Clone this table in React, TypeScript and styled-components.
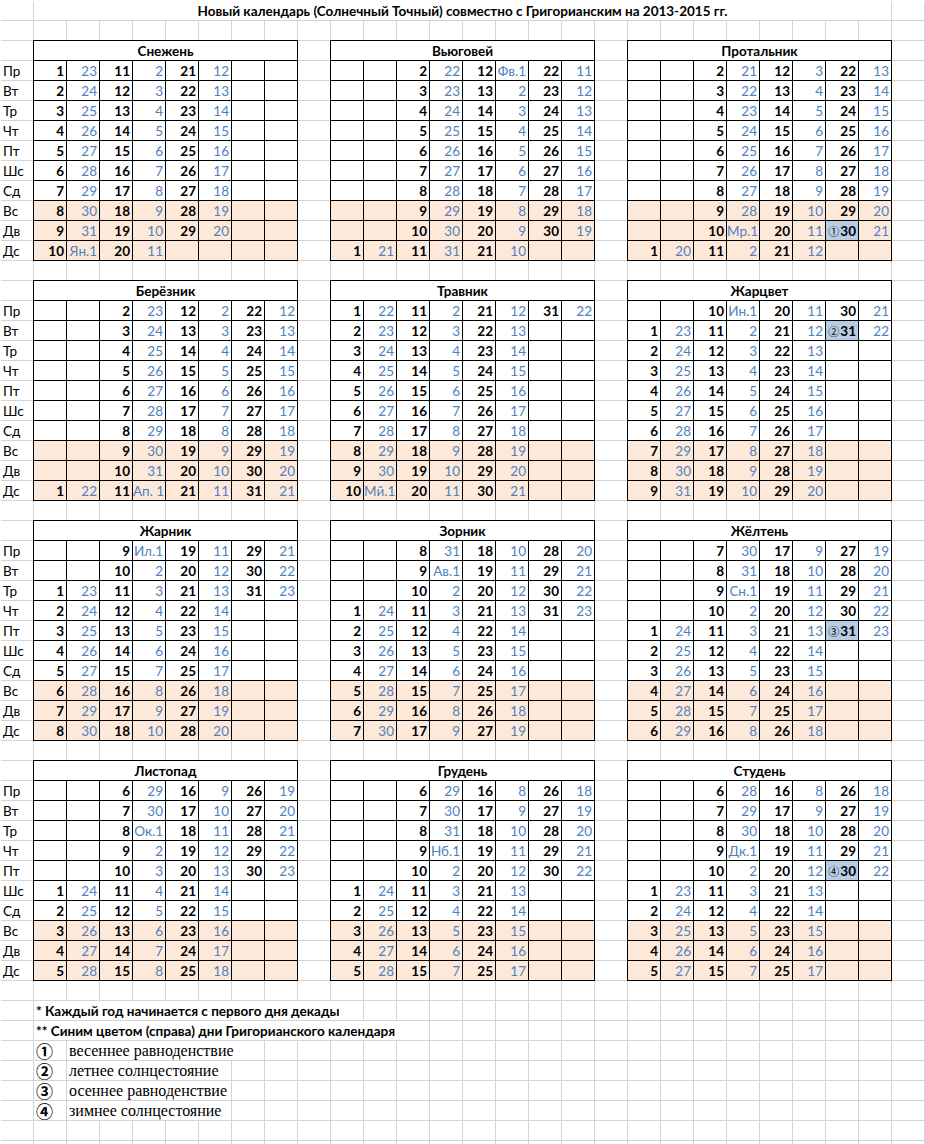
import React from 'react';
import styled, { createGlobalStyle } from 'styled-components';

const GlobalStyle = createGlobalStyle`
  html, body { margin: 0; padding: 0; background: #fff; }
`;

const GRID = '#d4d4d4';
const COL = 33;

const Sheet = styled.div`
  width: 925px;
  min-height: 1144px;
  box-sizing: border-box;
  font-family: Lato, "Noto Sans", sans-serif;
  font-size: 13.5px;
  color: #000;
  background-color: #fff;
  background-image:
    linear-gradient(#fff, #fff),
    linear-gradient(#fff, #fff),
    linear-gradient(to right, ${GRID} 1px, transparent 1px),
    linear-gradient(to bottom, ${GRID} 1px, transparent 1px);
  background-size: 100% 1px, 1px 100%, ${COL}px 20px, ${COL}px 20px;
  background-repeat: no-repeat, no-repeat, repeat, repeat;
`;

const TitleRow = styled.div`
  height: 40px;
  padding-left: 34px;
  box-sizing: border-box;
`;

const Title = styled.div`
  width: ${26 * COL - 1}px;
  height: 20px;
  padding-top: 1px;
  box-sizing: border-box;
  background: #fff;
  text-align: center;
  font-weight: 700;
  line-height: 20px;
  white-space: nowrap;
  overflow: hidden;
`;

const BlockRow = styled.div`
  display: flex;
  height: 240px;
  align-items: flex-start;
`;

const DayLabels = styled.div`
  display: flex;
  flex-direction: column;
  width: ${COL}px;
  padding-top: 21px;
`;

const DayLabel = styled.div`
  height: 20px;
  line-height: 20px;
  padding-left: 3px;
  box-sizing: border-box;
`;

const MonthGroup = styled.div`
  display: flex;
  gap: 32px;
`;

const Month = styled.div`
  display: grid;
  grid-template-columns: repeat(8, ${COL}px);
  grid-auto-rows: 20px;
  width: 265px;
  box-sizing: border-box;
  border-left: 1px solid #000;
  border-top: 1px solid #000;
  background: #fff;
`;

const MonthName = styled.div`
  grid-column: 1 / -1;
  border-right: 1px solid #000;
  border-bottom: 1px solid #000;
  text-align: center;
  font-weight: 700;
  line-height: 20px;
  overflow: hidden;
`;

const Cell = styled.div<{ $greg: boolean; $weekend: boolean; $hl: boolean }>`
  border-right: 1px solid #000;
  border-bottom: 1px solid #000;
  box-sizing: border-box;
  padding-right: 2px;
  text-align: right;
  line-height: 20px;
  white-space: nowrap;
  overflow: hidden;
  color: ${(p) => (p.$greg ? '#4f81bd' : '#000')};
  font-weight: ${(p) => (p.$greg ? 400 : 700)};
  background: ${(p) => (p.$hl ? '#b8cce4' : p.$weekend ? '#fde9d9' : '#fff')};
`;

const Circ = styled.span`
  font-family: "Noto Sans CJK JP", "DejaVu Sans", sans-serif;
  font-weight: 400;
  font-size: 11px;
  margin-right: 1px;
`;

const FootRow = styled.div`
  display: flex;
  height: 20px;
  padding-left: 34px;
  box-sizing: border-box;
`;

const Note = styled.div<{ $cols: number }>`
  width: ${(p) => p.$cols * COL - 1}px;
  height: 19px;
  margin-top: 1px;
  padding-left: 2px;
  box-sizing: border-box;
  background: #fff;
  font-weight: 700;
  line-height: 20px;
  white-space: nowrap;
`;

const LegendMark = styled.div`
  width: 32px;
  height: 19px;
  margin-top: 1px;
  padding-left: 2px;
  box-sizing: border-box;
  font-family: "Noto Sans CJK JP", "DejaVu Sans", sans-serif;
  font-size: 17px;
  line-height: 19px;
  font-weight: 700;
`;

const LegendText = styled.div<{ $cols: number }>`
  width: ${(p) => p.$cols * COL - 1}px;
  height: 19px;
  margin-top: 1px;
  margin-left: 1px;
  padding-left: 2px;
  box-sizing: border-box;
  background: #fff;
  font-family: "Liberation Serif", "Times New Roman", serif;
  font-size: 16px;
  line-height: 19px;
  white-space: nowrap;
`;

const DAYS = ['Пр', 'Вт', 'Тр', 'Чт', 'Пт', 'Шс', 'Сд', 'Вс', 'Дв', 'Дс'];

type MonthData = { name: string; rows: string[] };

const MONTHS: MonthData[] = [
  {
    name: 'Снежень',
    rows: [
      '1 23 11 2 21 12 _ _',
      '2 24 12 3 22 13 _ _',
      '3 25 13 4 23 14 _ _',
      '4 26 14 5 24 15 _ _',
      '5 27 15 6 25 16 _ _',
      '6 28 16 7 26 17 _ _',
      '7 29 17 8 27 18 _ _',
      '8 30 18 9 28 19 _ _',
      '9 31 19 10 29 20 _ _',
      '10 Ян.1 20 11 _ _ _ _',
    ],
  },
  {
    name: 'Вьюговей',
    rows: [
      '_ _ 2 22 12 Фв.1 22 11',
      '_ _ 3 23 13 2 23 12',
      '_ _ 4 24 14 3 24 13',
      '_ _ 5 25 15 4 25 14',
      '_ _ 6 26 16 5 26 15',
      '_ _ 7 27 17 6 27 16',
      '_ _ 8 28 18 7 28 17',
      '_ _ 9 29 19 8 29 18',
      '_ _ 10 30 20 9 30 19',
      '1 21 11 31 21 10 _ _',
    ],
  },
  {
    name: 'Протальник',
    rows: [
      '_ _ 2 21 12 3 22 13',
      '_ _ 3 22 13 4 23 14',
      '_ _ 4 23 14 5 24 15',
      '_ _ 5 24 15 6 25 16',
      '_ _ 6 25 16 7 26 17',
      '_ _ 7 26 17 8 27 18',
      '_ _ 8 27 18 9 28 19',
      '_ _ 9 28 19 10 29 20',
      '_ _ 10 Мр.1 20 11 ①30 21',
      '1 20 11 2 21 12 _ _',
    ],
  },
  {
    name: 'Берёзник',
    rows: [
      '_ _ 2 23 12 2 22 12',
      '_ _ 3 24 13 3 23 13',
      '_ _ 4 25 14 4 24 14',
      '_ _ 5 26 15 5 25 15',
      '_ _ 6 27 16 6 26 16',
      '_ _ 7 28 17 7 27 17',
      '_ _ 8 29 18 8 28 18',
      '_ _ 9 30 19 9 29 19',
      '_ _ 10 31 20 10 30 20',
      '1 22 11 Ап.~1 21 11 31 21',
    ],
  },
  {
    name: 'Травник',
    rows: [
      '1 22 11 2 21 12 31 22',
      '2 23 12 3 22 13 _ _',
      '3 24 13 4 23 14 _ _',
      '4 25 14 5 24 15 _ _',
      '5 26 15 6 25 16 _ _',
      '6 27 16 7 26 17 _ _',
      '7 28 17 8 27 18 _ _',
      '8 29 18 9 28 19 _ _',
      '9 30 19 10 29 20 _ _',
      '10 Мй.1 20 11 30 21 _ _',
    ],
  },
  {
    name: 'Жарцвет',
    rows: [
      '_ _ 10 Ин.1 20 11 30 21',
      '1 23 11 2 21 12 ②31 22',
      '2 24 12 3 22 13 _ _',
      '3 25 13 4 23 14 _ _',
      '4 26 14 5 24 15 _ _',
      '5 27 15 6 25 16 _ _',
      '6 28 16 7 26 17 _ _',
      '7 29 17 8 27 18 _ _',
      '8 30 18 9 28 19 _ _',
      '9 31 19 10 29 20 _ _',
    ],
  },
  {
    name: 'Жарник',
    rows: [
      '_ _ 9 Ил.1 19 11 29 21',
      '_ _ 10 2 20 12 30 22',
      '1 23 11 3 21 13 31 23',
      '2 24 12 4 22 14 _ _',
      '3 25 13 5 23 15 _ _',
      '4 26 14 6 24 16 _ _',
      '5 27 15 7 25 17 _ _',
      '6 28 16 8 26 18 _ _',
      '7 29 17 9 27 19 _ _',
      '8 30 18 10 28 20 _ _',
    ],
  },
  {
    name: 'Зорник',
    rows: [
      '_ _ 8 31 18 10 28 20',
      '_ _ 9 Ав.1 19 11 29 21',
      '_ _ 10 2 20 12 30 22',
      '1 24 11 3 21 13 31 23',
      '2 25 12 4 22 14 _ _',
      '3 26 13 5 23 15 _ _',
      '4 27 14 6 24 16 _ _',
      '5 28 15 7 25 17 _ _',
      '6 29 16 8 26 18 _ _',
      '7 30 17 9 27 19 _ _',
    ],
  },
  {
    name: 'Жёлтень',
    rows: [
      '_ _ 7 30 17 9 27 19',
      '_ _ 8 31 18 10 28 20',
      '_ _ 9 Сн.1 19 11 29 21',
      '_ _ 10 2 20 12 30 22',
      '1 24 11 3 21 13 ③31 23',
      '2 25 12 4 22 14 _ _',
      '3 26 13 5 23 15 _ _',
      '4 27 14 6 24 16 _ _',
      '5 28 15 7 25 17 _ _',
      '6 29 16 8 26 18 _ _',
    ],
  },
  {
    name: 'Листопад',
    rows: [
      '_ _ 6 29 16 9 26 19',
      '_ _ 7 30 17 10 27 20',
      '_ _ 8 Ок.1 18 11 28 21',
      '_ _ 9 2 19 12 29 22',
      '_ _ 10 3 20 13 30 23',
      '1 24 11 4 21 14 _ _',
      '2 25 12 5 22 15 _ _',
      '3 26 13 6 23 16 _ _',
      '4 27 14 7 24 17 _ _',
      '5 28 15 8 25 18 _ _',
    ],
  },
  {
    name: 'Грудень',
    rows: [
      '_ _ 6 29 16 8 26 18',
      '_ _ 7 30 17 9 27 19',
      '_ _ 8 31 18 10 28 20',
      '_ _ 9 Нб.1 19 11 29 21',
      '_ _ 10 2 20 12 30 22',
      '1 24 11 3 21 13 _ _',
      '2 25 12 4 22 14 _ _',
      '3 26 13 5 23 15 _ _',
      '4 27 14 6 24 16 _ _',
      '5 28 15 7 25 17 _ _',
    ],
  },
  {
    name: 'Студень',
    rows: [
      '_ _ 6 28 16 8 26 18',
      '_ _ 7 29 17 9 27 19',
      '_ _ 8 30 18 10 28 20',
      '_ _ 9 Дк.1 19 11 29 21',
      '_ _ 10 2 20 12 ④30 22',
      '1 23 11 3 21 13 _ _',
      '2 24 12 4 22 14 _ _',
      '3 25 13 5 23 15 _ _',
      '4 26 14 6 24 16 _ _',
      '5 27 15 7 25 17 _ _',
    ],
  },
];

const CIRCLES = '①②③④';

function MonthBlock({ data }: { data: MonthData }) {
  return (
    <Month>
      <MonthName>{data.name}</MonthName>
      {data.rows.map((row, ri) =>
        row.split(' ').map((tok, ci) => {
          const text = tok === '_' ? '' : tok.replace('~', ' ');
          const hl = text.length > 0 && CIRCLES.includes(text[0]);
          return (
            <Cell key={`${ri}-${ci}`} $greg={ci % 2 === 1} $weekend={ri >= 7} $hl={hl}>
              {hl ? (
                <>
                  <Circ>{text[0]}</Circ>
                  {text.slice(1)}
                </>
              ) : (
                text
              )}
            </Cell>
          );
        })
      )}
    </Month>
  );
}

const LEGEND: { mark: string; text: string; cols: number }[] = [
  { mark: '①', text: 'весеннее равноденствие', cols: 6 },
  { mark: '②', text: 'летнее солнцестояние', cols: 5 },
  { mark: '③', text: 'осеннее равноденствие', cols: 5 },
  { mark: '④', text: 'зимнее солнцестояние', cols: 5 },
];

export default function App() {
  const groups = [0, 1, 2, 3].map((g) => MONTHS.slice(g * 3, g * 3 + 3));
  return (
    <>
      <GlobalStyle />
      <Sheet>
        <TitleRow>
          <Title>Новый календарь (Солнечный Точный) совместно с Григорианским на 2013-2015 гг.</Title>
        </TitleRow>
        {groups.map((grp, gi) => (
          <BlockRow key={gi}>
            <DayLabels>
              {DAYS.map((d) => (
                <DayLabel key={d}>{d}</DayLabel>
              ))}
            </DayLabels>
            <MonthGroup>
              {grp.map((m) => (
                <MonthBlock key={m.name} data={m} />
              ))}
            </MonthGroup>
          </BlockRow>
        ))}
        <FootRow>
          <Note $cols={10}>* Каждый год начинается с первого дня декады</Note>
        </FootRow>
        <FootRow>
          <Note $cols={12}>** Синим цветом (справа) дни Григорианского календаря</Note>
        </FootRow>
        {LEGEND.map((l) => (
          <FootRow key={l.mark}>
            <LegendMark>{l.mark}</LegendMark>
            <LegendText $cols={l.cols}>{l.text}</LegendText>
          </FootRow>
        ))}
      </Sheet>
    </>
  );
}
